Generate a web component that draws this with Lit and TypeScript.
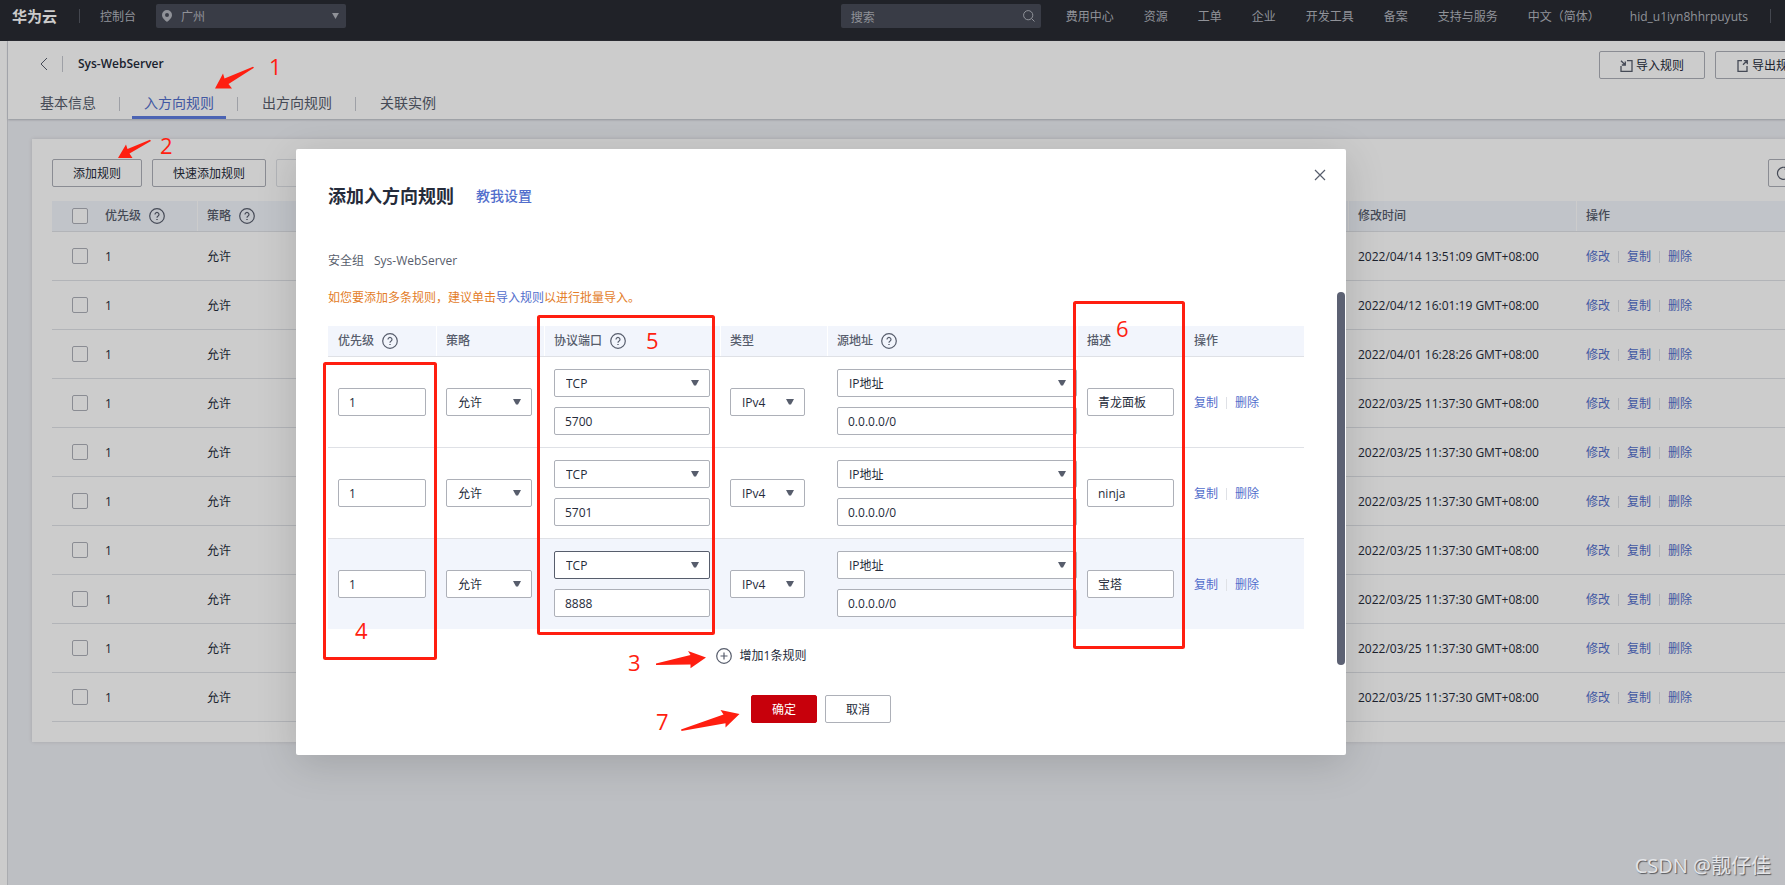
import { LitElement, html, css, svg } from "lit";
import { customElement, state } from "lit/decorators.js";

interface Rule {
  priority: string;
  port: string;
  note: string;
  active?: boolean;
}

const NAV = ["费用中心", "资源", "工单", "企业", "开发工具", "备案", "支持与服务", "中文（简体）", "hid_u1iyn8hhrpuyuts"];
const TABS = ["基本信息", "入方向规则", "出方向规则", "关联实例"];
const TIMES = [
  "2022/04/14 13:51:09 GMT+08:00",
  "2022/04/12 16:01:19 GMT+08:00",
  "2022/04/01 16:28:26 GMT+08:00",
  ...Array(7).fill("2022/03/25 11:37:30 GMT+08:00"),
];

const helpIcon = html`<svg class="help" width="16" height="16" viewBox="0 0 16 16" fill="none" stroke="currentColor" stroke-width="1.2" aria-hidden="true">
  <circle cx="8" cy="8" r="7.3" />
  <path d="M6 6.4a2 2 0 1 1 3.1 1.7c-.8.5-1.1.9-1.1 1.7" />
  <path d="M8 10.9v1.2" stroke-width="1.4" />
</svg>`;

const caret = html`<svg class="caret" width="8" height="6" viewBox="0 0 8 6" aria-hidden="true"><path d="M0 0h8L5 5.4H3z" fill="currentColor" /></svg>`;

@customElement("app-root")
export class AppRoot extends LitElement {
  @state() rules: Rule[] = [
    { priority: "1", port: "5700", note: "青龙面板" },
    { priority: "1", port: "5701", note: "ninja" },
    { priority: "1", port: "8888", note: "宝塔", active: true },
  ];

  static styles = css`
    :host {
      display: block;
      position: relative;
      min-height: 100vh;
      overflow: hidden;
      background: #edeff4;
      color: #252b3a;
      font: 12px/20px "Open Sans", "Noto Sans CJK SC", sans-serif;
    }
    * { box-sizing: border-box; }
    button, input, select { font: inherit; color: inherit; margin: 0; }
    a { color: #526ecc; text-decoration: none; }
    .topbar {
      display: flex;
      align-items: center;
      height: 41px;
      padding: 4px 0 13px 12px;
      background: #282b33;
      color: #b4b7bf;
    }
    .brand { color: #fff; font-size: 15px; font-weight: 700; }
    .bar { width: 1px; height: 14px; background: #565963; flex: none; }
    .brand + .bar { margin: 0 20px 0 22px; }
    .console { padding-top: 2px; }
    .region {
      position: relative;
      display: flex;
      align-items: center;
      width: 190px;
      height: 24px;
      margin-left: 20px;
      background: #484c58;
      border-radius: 2px;
    }
    .region select {
      appearance: none;
      width: 100%;
      height: 24px;
      padding: 2px 0 0 25px;
      border: 0;
      background: none;
    }
    .pin { position: absolute; left: 6px; }
    .region .caret { position: absolute; right: 7px; }
    .search {
      position: relative;
      display: flex;
      align-items: center;
      width: 200px;
      height: 24px;
      margin-left: auto;
      background: #484c58;
      border-radius: 2px;
    }
    .search input {
      width: 100%;
      height: 24px;
      padding: 2px 28px 0 10px;
      border: 0;
      background: none;
    }
    .search input::placeholder { color: #b4b7bf; opacity: 1; }
    .search svg { position: absolute; right: 6px; }
    .nav { display: flex; gap: 30px; padding: 2px 22px 0 25px; white-space: nowrap; }
    .nav a { color: inherit; }
    .topbar > .bar:last-child { margin-right: 14px; }
    .body {
      width: calc(100% + 64px);
      display: flex;
      min-height: calc(100vh - 41px);
    }
    .rail { width: 8px; flex: none; background: #fff; border-right: 1px solid #d5d7dd; }
    .page { flex: 1; min-width: 0; }
    .head {
      display: flex;
      justify-content: space-between;
      align-items: flex-start;
      padding: 10px 28px 0 20px;
      background: #fff;
      box-shadow: 0 1px 2px #b9bcc4;
    }
    .crumb { display: flex; align-items: center; height: 26px; padding-left: 12px; }
    .back { display: flex; padding: 0; border: 0; background: none; color: #575d6c; }
    .crumb .bar { height: 16px; margin: 0 15px 0 14px; background: #c6c8d0; }
    h1 { margin: 0; font-size: 12px; font-weight: 600; }
    .tabs { display: flex; align-items: center; height: 42px; }
    .tab {
      height: 42px;
      padding: 16px 12px 0;
      font-size: 14px;
      color: #575d6c;
      border-bottom: 3px solid transparent;
    }
    .tab.on { color: #526ecc; border-color: #5e7ce0; }
    .tabs .bar { margin: 12px 12px 0 11px; background: #c6c8d0; }
    .actions { display: flex; gap: 10px; }
    .btn {
      display: inline-flex;
      align-items: center;
      justify-content: center;
      gap: 3px;
      height: 28px;
      padding: 2px 20px 0;
      border: 1px solid #adb0b8;
      border-radius: 2px;
      background: #fff;
      white-space: nowrap;
    }
    .head .btn, .tools .btn { background: none; }
    .btn.off { border-color: #dfe1e6; color: #adb0b8; }
    .btn.primary { background: #c7000b; border-color: #c7000b; color: #fff; }
    .card {
      margin: 20px 30px 0 24px;
      padding: 20px;
      background: #fff;
      box-shadow: 0 0 4px rgba(0, 0, 0, 0.12);
    }
    .tools { display: flex; gap: 10px; margin-bottom: 14px; }
    .tools .refresh { margin-left: auto; padding: 0 7px; }
    .grid { width: 100%; border-collapse: separate; border-spacing: 0; table-layout: fixed; }
    .grid th {
      height: 31px;
      padding: 0 10px;
      text-align: left;
      font-weight: 500;
      color: #575d6c;
      background: #f2f5fc;
      border-bottom: 1px solid #dfe1e6;
      white-space: nowrap;
    }
    .grid th + th { box-shadow: inset 1px 0 #fff; }
    .list th:nth-child(2) { box-shadow: none; }
    .grid td { padding: 0 10px; border-bottom: 1px solid #dfe1e6; }
    .list td { height: 49px; padding-top: 2px; }
    .list th:first-child, .list td:first-child { padding: 0 0 0 20px; }
    .c-check { width: 43px; }
    .c-prio { width: 102px; }
    .c-time { width: 228px; }
    .c-ops { width: 223px; }
    .tick {
      appearance: none;
      display: block;
      width: 16px;
      height: 16px;
      border: 1px solid #adb0b8;
      border-radius: 2px;
      background: #fff;
    }
    .th { display: flex; align-items: center; gap: 8px; }
    .links { display: flex; align-items: center; gap: 8px; }
    .links .bar { height: 12px; background: #dfe1e6; }
    .form .links { padding-top: 2px; }
    .mask {
      position: absolute;
      inset: 0;
      display: flex;
      justify-content: center;
      align-items: flex-start;
      padding: 149px 143px 0 0;
      background: rgba(0, 0, 0, 0.2);
    }
    .dialog {
      position: relative;
      width: 1050px;
      padding: 35px 42px 32px 32px;
      background: #fff;
      border-radius: 2px;
      box-shadow: 0 8px 40px rgba(0, 0, 0, 0.15);
    }
    .close {
      position: absolute;
      top: 20px;
      right: 20px;
      display: flex;
      padding: 0;
      border: 0;
      background: none;
      color: #575d6c;
    }
    .title { display: flex; align-items: center; gap: 22px; height: 24px; margin-bottom: 43px; }
    h2 { margin: 0; font-size: 18px; font-weight: 700; }
    .title a { font-size: 14px; font-weight: 500; }
    .group { display: flex; gap: 10px; color: #575d6c; }
    .hint { margin: 17px 0 18px; color: #e37d29; }
    .thumb {
      position: absolute;
      top: 143px;
      right: 1px;
      bottom: 90px;
      width: 8px;
      border-radius: 4px;
      background: #5c6173;
    }
    .form td { height: 91px; }
    .form tr:last-child td { height: 90px; border-bottom: 0; }
    .form .active td { background: #f2f5fc; }
    .form .wide { padding-right: 0; }
    .w1 { width: 108px; }
    .w2 { width: 176px; }
    .w3 { width: 107px; }
    .w4 { width: 250px; }
    .stack { display: grid; gap: 10px; }
    .box {
      display: block;
      width: 100%;
      height: 28px;
      padding: 0 10px;
      border: 1px solid #adb0b8;
      border-radius: 2px;
      background: #fff;
      appearance: none;
      outline: 0;
    }
    .pick { position: relative; display: flex; align-items: center; color: #575d6c; }
    .pick .box { padding: 2px 11px 0; color: #252b3a; }
    .pick .caret { position: absolute; right: 11px; }
    .pick.p2 { width: 86px; }
    .pick.p3 { width: 75px; }
    .pick .focus { border-color: #575d6c; }
    .more {
      display: flex;
      justify-content: center;
      margin: 17px 0 29px;
      padding-right: 110px;
    }
    .more button {
      display: flex;
      align-items: center;
      gap: 8px;
      height: 20px;
      padding: 0;
      border: 0;
      background: none;
    }
    .more svg { color: #575d6c; }
    .foot { display: flex; justify-content: center; gap: 8px; padding-left: 10px; }
    .marks { position: absolute; top: 0; left: 0; pointer-events: none; }
    .num { font-size: 22px; fill: #ff1e10; }
    .mark { position: absolute; right: 14px; bottom: 4px; font-size: 20px; line-height: 30px; color: #e4e5e8; text-shadow: 1px 1px 1px #55575c; }
  `;

  private addRule() {
    this.rules = [...this.rules, { priority: "1", port: "", note: "" }];
  }

  private removeRule(rule: Rule) {
    this.rules = this.rules.filter((r) => r !== rule);
  }

  private picker(label: string, value: string, size = "", focus = false) {
    return html`<span class="pick ${size}">
      <select class="box ${focus ? "focus" : ""}" aria-label=${label}><option>${value}</option></select>${caret}
    </span>`;
  }

  private renderTopbar() {
    return html`<header class="topbar">
      <span class="brand">华为云</span><span class="bar"></span><span class="console">控制台</span>
      <span class="region">
        <svg class="pin" width="10" height="12" viewBox="0 0 10 12" aria-hidden="true">
          <path fill="currentColor" fill-rule="evenodd" d="M5 0a5 5 0 0 1 5 5c0 3-3 5.400-5 7C3 10.400 0 8 0 5a5 5 0 0 1 5-5zm0 3a2 2 0 1 0 0 4 2 2 0 0 0 0-4z" />
        </svg>
        <select aria-label="区域"><option>广州</option></select>
        <svg class="caret" width="7" height="6" viewBox="0 0 8 7" aria-hidden="true"><path d="M0 0h8L4 7z" fill="currentColor" /></svg>
      </span>
      <span class="search">
        <input type="text" placeholder="搜索" aria-label="搜索" />
        <svg width="12" height="12" viewBox="0 0 12 12" fill="none" stroke="currentColor" aria-hidden="true"><circle cx="5.200" cy="5.200" r="4.600" /><path d="M8.500 8.500l3 3" /></svg>
      </span>
      <nav class="nav">${NAV.map((n) => html`<a href="#">${n}</a>`)}</nav>
      <span class="bar"></span>
    </header>`;
  }

  private renderHead() {
    return html`<section class="head">
      <div>
        <div class="crumb">
          <button class="back" aria-label="返回"><svg width="8" height="14" viewBox="0 0 8 14" fill="none" stroke="currentColor"><path d="M7 1L1 7l6 6" /></svg></button>
          <span class="bar"></span>
          <h1>Sys-WebServer</h1>
        </div>
        <nav class="tabs">
          ${TABS.map((t, i) => html`${i ? html`<span class="bar"></span>` : ""}<a href="#" class="tab ${i === 1 ? "on" : ""}">${t}</a>`)}
        </nav>
      </div>
      <div class="actions">
        <button class="btn">
          <svg width="13" height="12" viewBox="0 0 13 12" fill="none" stroke="#575d6c" stroke-width="1.300"><path d="M1 6v5.300h11V.700H7M1 .700l4 4M5.300 1.500v3.500H1.800" /></svg>导入规则
        </button>
        <button class="btn">
          <svg width="13" height="12" viewBox="0 0 13 12" fill="none" stroke="#575d6c" stroke-width="1.300"><path d="M6 .700H2v10.600h9V6M7 4.800l4-4M7.800.700h3.500v3.500" /></svg>导出规则
        </button>
      </div>
    </section>`;
  }

  private renderList() {
    return html`<section class="card">
      <div class="tools">
        <button class="btn">添加规则</button>
        <button class="btn">快速添加规则</button>
        <button class="btn off" disabled>删除</button>
        <button class="btn refresh" aria-label="刷新">
          <svg width="15" height="15" viewBox="0 0 15 15" fill="none" stroke="#575d6c" stroke-width="1.200"><path d="M11.500 2.800A6 6 0 1 0 13.500 7.500M11.800 0v3.200H8.600" /></svg>
        </button>
      </div>
      <table class="grid list">
        <colgroup><col class="c-check" /><col class="c-prio" /><col /><col class="c-time" /><col class="c-ops" /></colgroup>
        <thead>
          <tr>
            <th><input type="checkbox" class="tick" aria-label="全选" /></th>
            <th><span class="th">优先级${helpIcon}</span></th>
            <th><span class="th">策略${helpIcon}</span></th>
            <th>修改时间</th>
            <th>操作</th>
          </tr>
        </thead>
        <tbody>
          ${TIMES.map((t, i) => html`<tr>
            <td><input type="checkbox" class="tick" aria-label="选择 ${i + 1}" /></td>
            <td>1</td>
            <td>允许</td>
            <td>${t}</td>
            <td><span class="links"><a href="#">修改</a><span class="bar"></span><a href="#">复制</a><span class="bar"></span><a href="#">删除</a></span></td>
          </tr>`)}
        </tbody>
      </table>
    </section>`;
  }

  private renderRule(r: Rule) {
    return html`<tr class=${r.active ? "active" : ""}>
      <td><input class="box" aria-label="优先级" .value=${r.priority} /></td>
      <td>${this.picker("策略", "允许", "p2")}</td>
      <td><span class="stack">${this.picker("协议", "TCP", "", r.active)}<input class="box" aria-label="端口" .value=${r.port} /></span></td>
      <td>${this.picker("类型", "IPv4", "p3")}</td>
      <td class="wide"><span class="stack">${this.picker("源地址", "IP地址")}<input class="box" aria-label="地址" .value=${"0.0.0.0/0"} /></span></td>
      <td><input class="box" aria-label="描述" .value=${r.note} /></td>
      <td><span class="links"><a href="#">复制</a><span class="bar"></span><a href="#" @click=${() => this.removeRule(r)}>删除</a></span></td>
    </tr>`;
  }

  private renderDialog() {
    return html`<div class="mask">
      <section class="dialog" role="dialog" aria-labelledby="dlg">
        <button class="close" aria-label="关闭"><svg width="12" height="12" viewBox="0 0 12 12" fill="none" stroke="currentColor" stroke-width="1.200"><path d="M1 1l10 10M11 1L1 11" /></svg></button>
        <div class="title"><h2 id="dlg">添加入方向规则</h2><a href="#">教我设置</a></div>
        <div class="group"><span>安全组</span><span>Sys-WebServer</span></div>
        <p class="hint">如您要添加多条规则，建议单击<a href="#">导入规则</a>以进行批量导入。</p>
        <table class="grid form">
          <colgroup><col class="w1" /><col class="w1" /><col class="w2" /><col class="w3" /><col class="w4" /><col class="w3" /><col /></colgroup>
          <thead>
            <tr>
              <th><span class="th">优先级${helpIcon}</span></th>
              <th>策略</th>
              <th><span class="th">协议端口${helpIcon}</span></th>
              <th>类型</th>
              <th><span class="th">源地址${helpIcon}</span></th>
              <th>描述</th>
              <th>操作</th>
            </tr>
          </thead>
          <tbody>${this.rules.map((r) => this.renderRule(r))}</tbody>
        </table>
        <div class="more">
          <button @click=${this.addRule}>
            <svg width="16" height="16" viewBox="0 0 16 16" fill="none" stroke="currentColor" stroke-width="1.200"><circle cx="8" cy="8" r="7.300" /><path d="M8 4.500v7M4.500 8h7" /></svg>增加1条规则
          </button>
        </div>
        <div class="foot"><button class="btn primary">确定</button><button class="btn">取消</button></div>
        <span class="thumb"></span>
      </section>
    </div>`;
  }

  private renderMarks() {
    const nums: [string, number, number][] = [
      ["1", 269, 75], ["2", 160, 154], ["3", 628, 671], ["4", 355, 639], ["5", 646, 349], ["6", 1116, 337], ["7", 656, 730],
    ];
    return html`<svg class="marks" width="1360" height="760" viewBox="0 0 1360 760">
      <g fill="none" stroke="#ff1e10" stroke-width="3" stroke-linejoin="round">
        <rect x="324.500" y="363.500" width="111" height="295" rx="1" />
        <rect x="538.500" y="316.500" width="175" height="317" rx="1" />
        <rect x="1074.500" y="302.500" width="109" height="345" rx="1" />
      </g>
      <g fill="#ff1e10">
        <path d="M215 88.500L223 73.500L224.500 78.500L253 66.800L254 67.800L228.500 84L232 88.500Z" />
        <path d="M118 158L126 144.500L127.500 149L150 139.800L151 141L129.500 153.500L132.500 158Z" />
        <path d="M706 657.500L688 651L690.500 655L656 663.500L656 665L690.500 664.500L690.500 668.300Z" />
        <path d="M739.500 714L720.500 710L723.500 714.500L681 729.500L681.500 731L725.500 723.300L725.500 727.500Z" />
      </g>
      ${nums.map(([n, x, y]) => svg`<text class="num" x=${x} y=${y}>${n}</text>`)}
    </svg>`;
  }

  render() {
    return html`
      ${this.renderTopbar()}
      <div class="body">
        <div class="rail"></div>
        <main class="page">${this.renderHead()}${this.renderList()}</main>
      </div>
      ${this.renderDialog()}
      ${this.renderMarks()}
      <span class="mark">CSDN @靓仔佳</span>
    `;
  }
}
